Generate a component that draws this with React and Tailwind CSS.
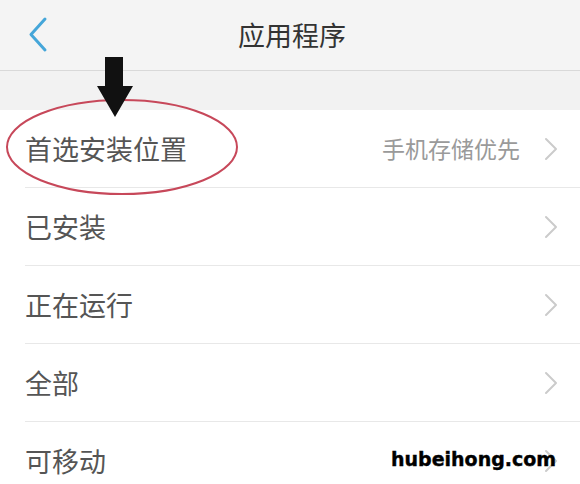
const rows = [
  { label: '首选安装位置', value: '手机存储优先' },
  { label: '已安装' },
  { label: '正在运行' },
  { label: '全部' },
  { label: '可移动' },
];

const Chevron = () => (
  <svg width="14" height="24" viewBox="0 0 14 24" fill="none">
    <path d="M2 2 L12 12 L2 22" stroke="#cbcbcb" strokeWidth="2" strokeLinecap="round" strokeLinejoin="round" />
  </svg>
);

export default function App() {
  return (
    <div
      className="relative w-[580px] h-[484px] overflow-hidden bg-white"
      style={{ fontFamily: '"Noto Sans CJK SC", "Noto Sans", sans-serif' }}
    >
      {/* Header */}
      <div className="grid grid-cols-[1fr_auto_1fr] items-center h-[71px] bg-[#f4f4f4] border-b border-[#d9d9d9]">
        <svg className="ml-[26px]" width="24" height="38" viewBox="0 0 24 38" fill="none">
          <path d="M19 3 L5 18.5 L19 34" stroke="#45a6d9" strokeWidth="3" strokeLinecap="round" strokeLinejoin="round" />
        </svg>
        <div className="pl-[4px] text-[27px] text-[#333] leading-none -mt-[2px]">应用程序</div>
        <div />
      </div>

      {/* Gap */}
      <div className="h-[39px] bg-[#f2f2f2]" />

      {/* List */}
      <div className="bg-white">
        {rows.map((r, i) => (
          <div key={i} className="pl-[25px]">
            <div className="flex items-center h-[78px] border-b border-[#e8e8e8] pr-[22px]">
              <span className="text-[27px] text-[#555] leading-none">{r.label}</span>
              <div className="ml-auto flex items-center">
                {r.value && <span className="text-[23px] text-[#9a9a9a] leading-none mr-[24px]">{r.value}</span>}
                <Chevron />
              </div>
            </div>
          </div>
        ))}
      </div>

      {/* Annotation: ellipse and arrow */}
      <svg className="absolute left-0 top-0 pointer-events-none" width="580" height="484">
        <ellipse cx="122" cy="147" rx="115" ry="47" fill="none" stroke="#c7485a" strokeWidth="2" />
        <path d="M105 57 H123 V86 H133 L115 117 L97 86 H105 Z" fill="#111" />
      </svg>

      {/* Watermark */}
      <div
        className="absolute left-[391px] top-[450px] text-[19px] font-bold text-black leading-none [-webkit-text-stroke:0.4px_black]"
        style={{ fontFamily: '"DejaVu Sans", sans-serif' }}
      >
        hubeihong.com
      </div>
    </div>
  );
}
